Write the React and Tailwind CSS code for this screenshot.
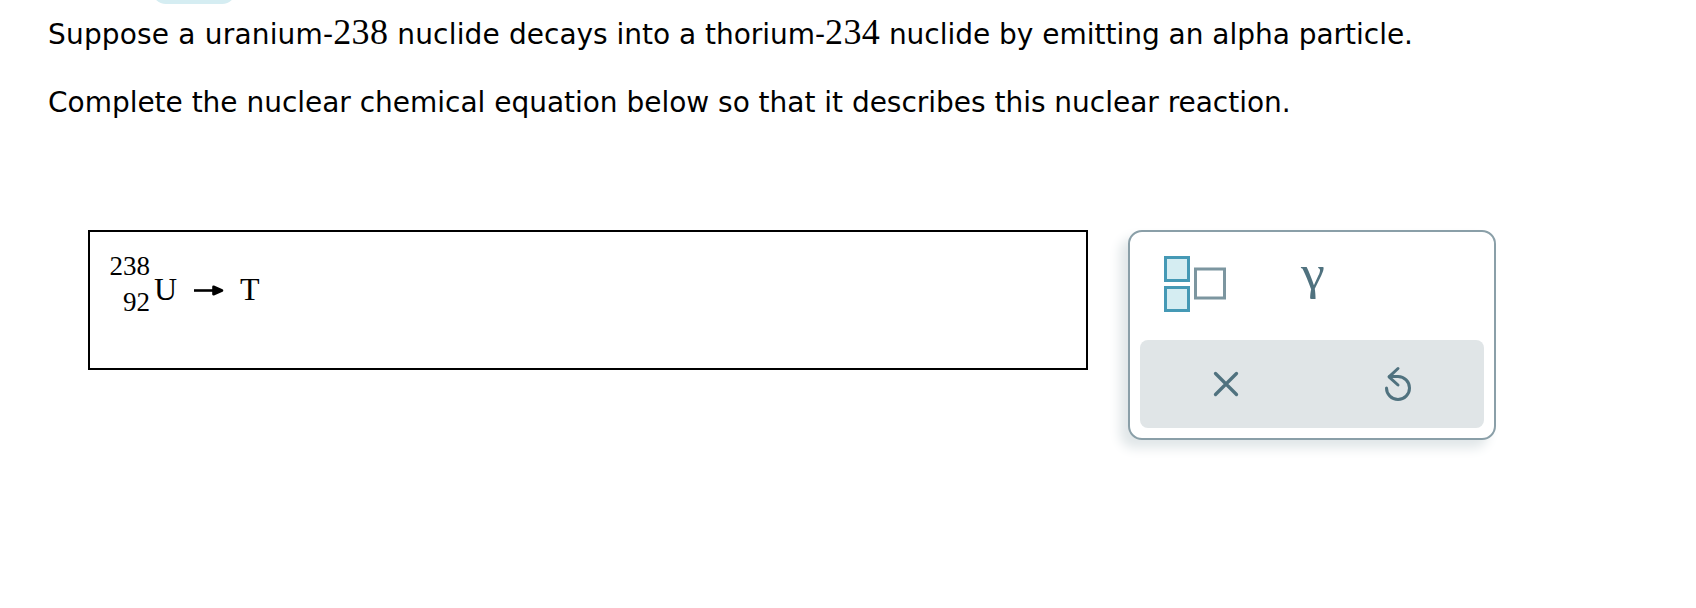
import clsx from "clsx";

function Num({ children }) {
  return (
    <span className="font-['Liberation_Serif',serif] text-[36px] tracking-[0.3px]">
      {children}
    </span>
  );
}

function Prompt() {
  return (
    <div className="flex flex-col gap-[31px] pl-12 text-[28px] leading-10 whitespace-nowrap font-['Verdana','DejaVu_Sans',sans-serif]">
      <p className="h-10 tracking-[-0.02px]">
        <span className="tracking-[0.18px]">Suppose a uranium-<Num>238</Num> nuclide </span>
        decays into a thorium-<Num>234</Num> nuclide by emitting an alpha particle.
      </p>
      <p className="h-10 tracking-[-0.02px]">
        Complete the nuclear chemical equation below so that it describes this nuclear reaction.
      </p>
    </div>
  );
}

function Equation() {
  return (
    <div className="flex h-[140px] w-[1000px] items-start border-2 border-black pt-4 pl-5 font-['Liberation_Serif',serif]">
      <div className="flex w-10 flex-col items-end text-[27px] leading-9">
        <span>238</span>
        <span>92</span>
      </div>
      <span className="ml-1 pt-[21px] text-[32px] leading-10">U</span>
      <svg className="mt-[34px] ml-4 h-4 w-[31px]" viewBox="0 0 31 16">
        <path d="M1 8.5h22" fill="none" stroke="#000" strokeWidth="2.6" />
        <path d="M20.5 4.8L29 8.5L20.5 12.2Z" fill="#000" stroke="#000" strokeWidth="2.6" strokeLinejoin="round" />
      </svg>
      <span className="ml-4 pt-[21px] text-[32px] leading-10">T</span>
    </div>
  );
}

function ToolButton({ label, className, children }) {
  return (
    <button type="button" aria-label={label} className={clsx("flex items-center", className)}>
      {children}
    </button>
  );
}

function Toolbox() {
  return (
    <div className="flex h-[210px] w-[368px] flex-col rounded-[14px] border-2 border-[#8a9fa8] bg-white p-2.5 shadow-[-8px_8px_12px_#e0e6e8]">
      <div className="flex h-[98px] items-start pl-6">
        <ToolButton label="Nuclide" className="mt-3.5">
          <svg className="h-[58px] w-[62px]" viewBox="0 0 62 58">
            <g fill="#d5edf2" stroke="#4599b5" strokeWidth="3">
              <rect x="1.5" y="1.5" width="23" height="23" />
              <rect x="1.5" y="31.5" width="23" height="23" />
            </g>
            <rect x="31.5" y="13" width="29" height="29" fill="#fff" stroke="#7c96a0" strokeWidth="3" />
          </svg>
        </ToolButton>
        <ToolButton label="Gamma" className="mt-px ml-[76px] scale-x-110 font-['Liberation_Serif',serif] text-[49px] leading-[60px] text-[#50727f]">
          γ
        </ToolButton>
      </div>
      <div className="flex h-[88px] rounded-lg bg-[#e0e5e7] text-[#50727f]">
        <ToolButton label="Clear" className="flex-1 justify-center">
          <svg className="h-8 w-8" viewBox="0 0 32 32" fill="none" stroke="currentColor" strokeWidth="3.3" strokeLinecap="round">
            <path d="M5.5 5.5l21 21M26.5 5.5l-21 21" />
          </svg>
        </ToolButton>
        <ToolButton label="Reset" className="flex-1 justify-center">
          <svg className="h-10 w-10" viewBox="0 0 40 40" fill="none" stroke="currentColor" strokeWidth="3" strokeLinecap="round" strokeLinejoin="round">
            <path d="M8.5 24A11.5 11.5 0 1 0 20 12.5H11.5" />
            <path d="M20 4.5L11 12.8L20 21" />
          </svg>
        </ToolButton>
      </div>
    </div>
  );
}

export default function App() {
  return (
    <main className="h-[608px] w-[1696px] overflow-hidden bg-white text-black">
      <div className="-mt-9 ml-[152px] h-10 w-[84px] rounded-[14px] bg-[#d5edf2]" />
      <div className="mt-2">
        <Prompt />
      </div>
      <div className="mt-[107px] ml-[88px] flex items-start gap-10">
        <Equation />
        <Toolbox />
      </div>
    </main>
  );
}
